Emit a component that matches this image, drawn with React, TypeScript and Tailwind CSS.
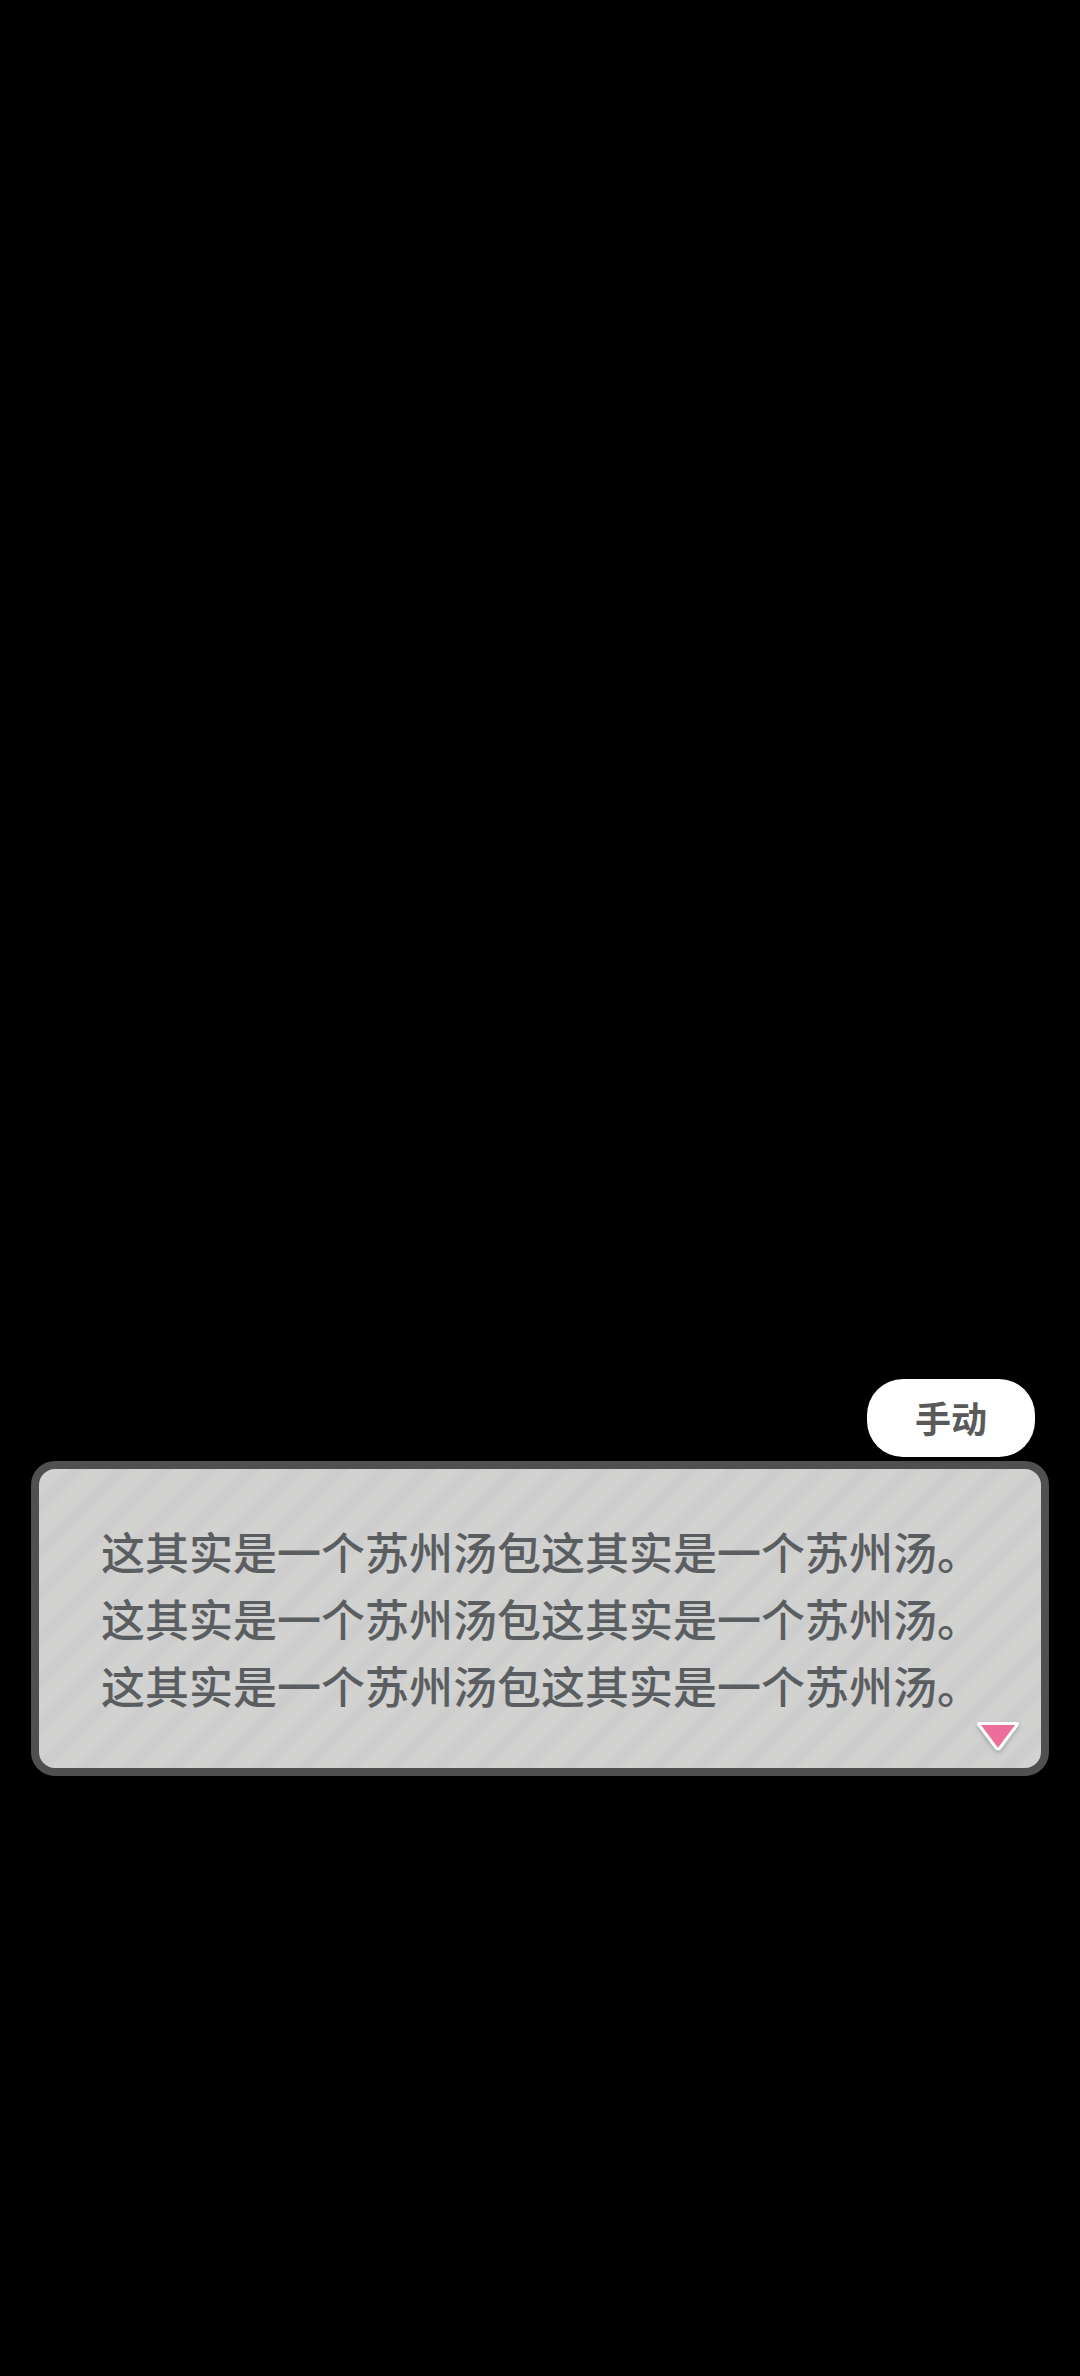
const lines = [
  '这其实是一个苏州汤包这其实是一个苏州汤。',
  '这其实是一个苏州汤包这其实是一个苏州汤。',
  '这其实是一个苏州汤包这其实是一个苏州汤。',
];

function ModeButton() {
  return (
    <button
      type="button"
      className="mr-3.5 h-[78px] rounded-[36px] bg-white px-12 pb-0.5 text-4xl font-bold text-[#5a5a5a]"
    >
      手动
    </button>
  );
}

function NextArrow() {
  return (
    <button
      type="button"
      aria-label="继续"
      className="absolute right-5 bottom-3"
    >
      <svg width="46" height="36" viewBox="0 0 46 36" className="block drop-shadow-[0_2px_2px_rgba(90,120,120,0.5)]">
        <path
          d="M4.500 3.500H41.500Q43 3.500 42 5L24.800 28Q23 30 21.200 28L4 5Q3 3.500 4.500 3.500Z"
          fill="#eb6e9b"
          stroke="#ffffff"
          strokeWidth="3"
          strokeLinejoin="round"
        />
      </svg>
    </button>
  );
}

function DialogBox() {
  return (
    <section className="relative rounded-3xl border-8 border-[#505050] bg-[#d1d1d0] bg-[repeating-linear-gradient(135deg,#cdcdce_0px,#d2d2d1_5px,#d2d2d1_18px,#cdcdce_24px,#cdcdce_31px)] px-[62px] py-[49px]">
      {lines.map((line, i) => (
        <p key={i} className="text-[44px] leading-[67px] font-medium whitespace-nowrap text-[#5b5e60]">
          {line}
        </p>
      ))}
      <NextArrow />
    </section>
  );
}

export default function App() {
  return (
    <main
      lang="zh-CN"
      className="flex min-h-screen flex-col bg-black px-[31px] pt-[1379px] font-['Noto_Sans_CJK_SC',sans-serif]"
    >
      <div className="flex flex-col gap-1">
        <div className="flex justify-end">
          <ModeButton />
        </div>
        <DialogBox />
      </div>
    </main>
  );
}
